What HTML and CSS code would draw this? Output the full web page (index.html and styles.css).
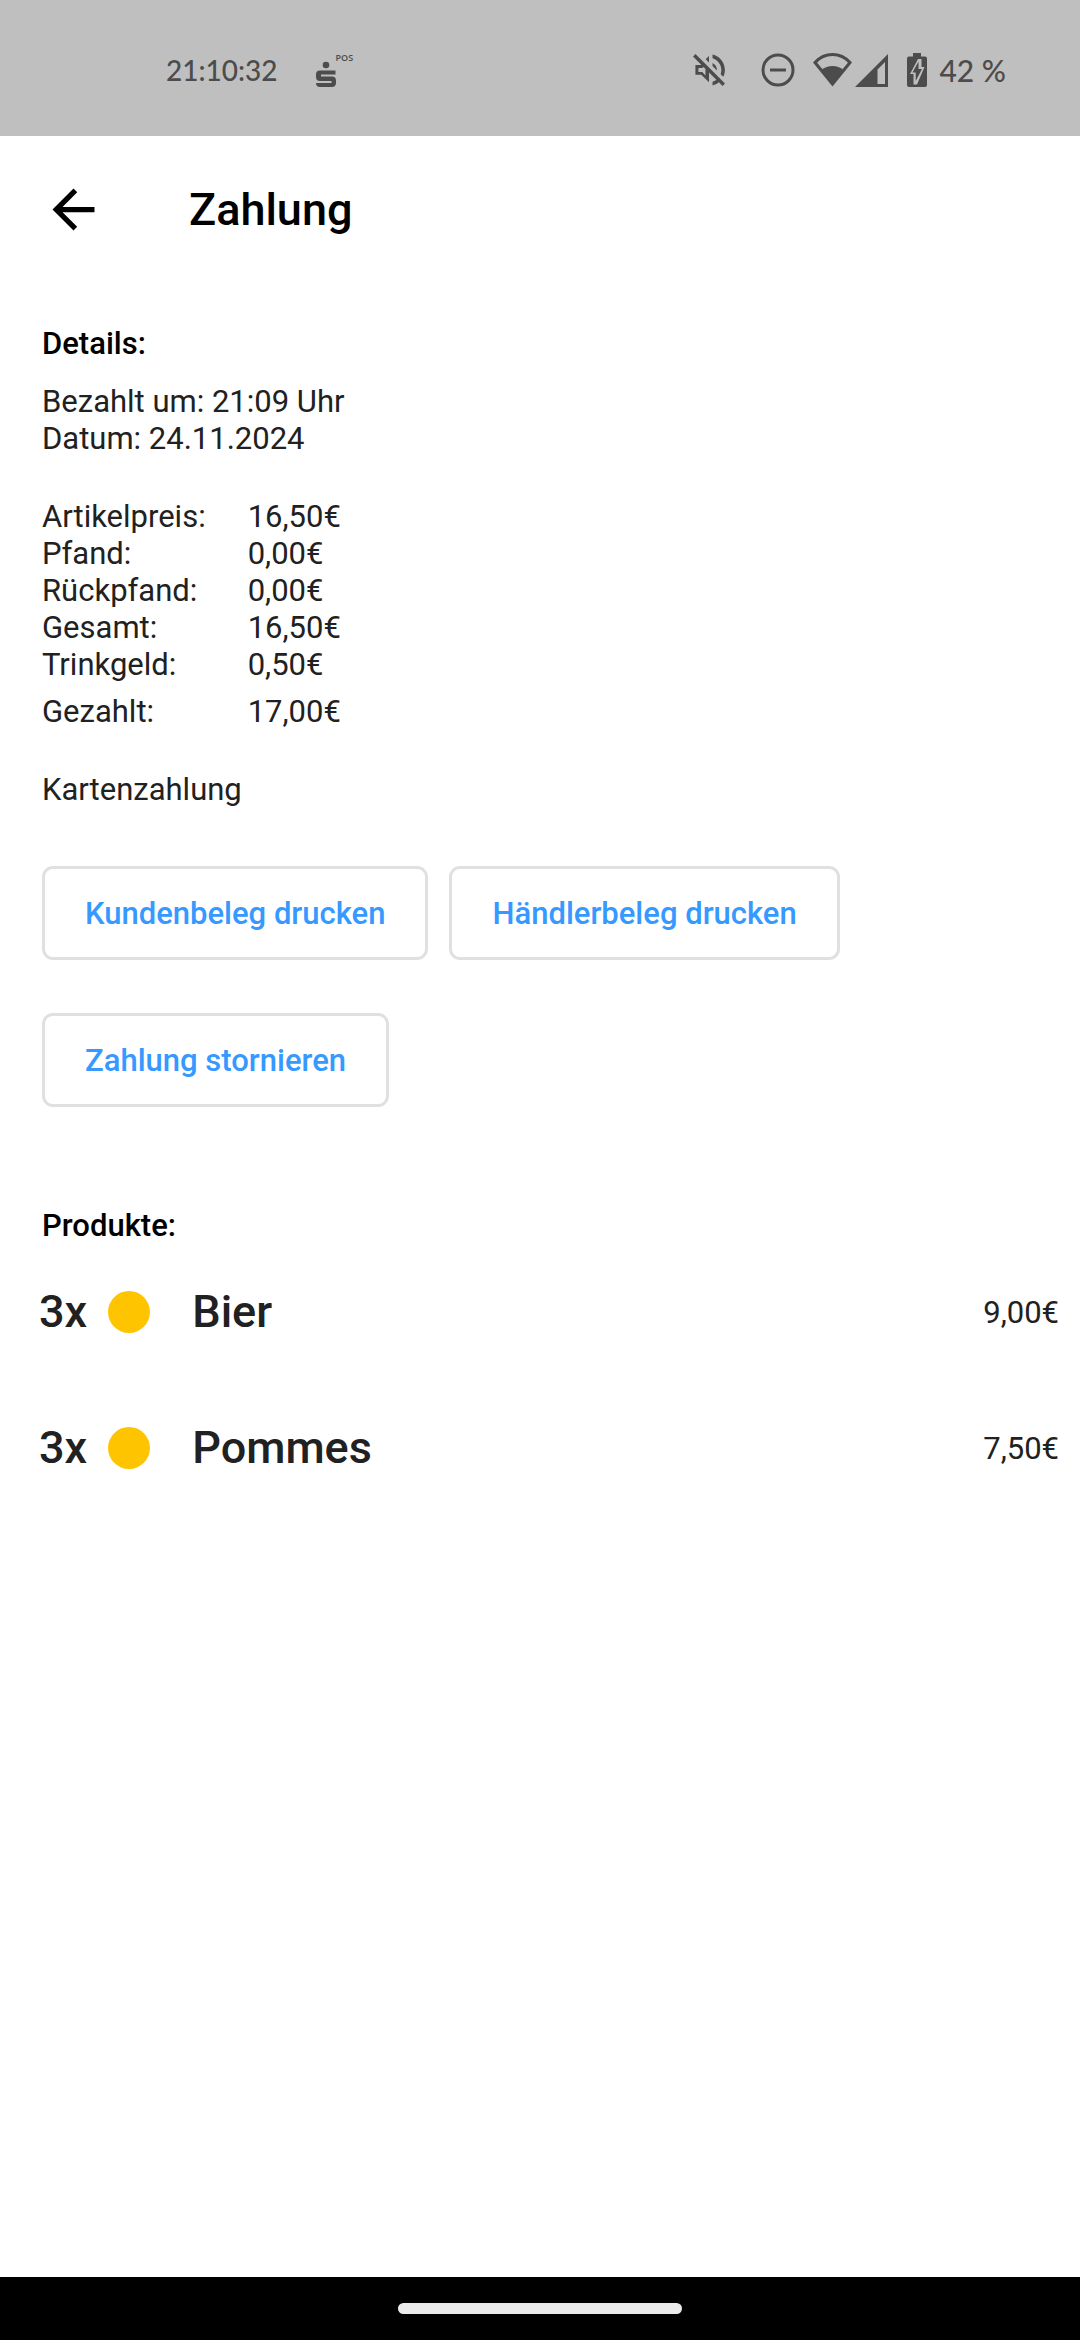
FILE: index.html
```html
<!DOCTYPE html>
<html lang="de">
<head>
    <meta charset="UTF-8">
    <meta name="viewport" content="width=device-width, initial-scale=1">
    <title>Zahlung</title>
    <link rel="stylesheet" href="styles.css">
</head>
<body>
<div class="status-bar">
    <span class="clock">21:10:32</span>
    <div class="pos">
        <svg class="pos-logo" width="20" height="26" viewBox="0 0 20 26">
            <circle cx="10" cy="4" r="3.3"/>
            <path d="M4 9.5H19.5V13.5H5V15.5H16A4 4 0 0 1 20 19.5V22.5A4 4 0 0 1 16 26H4A4 4 0 0 1 0 22H15.5V20H4A4 4 0 0 1 0 16V13.5A4 4 0 0 1 4 9.5Z"/>
        </svg>
        <span class="pos-text">POS</span>
    </div>
    <div class="status-icons">
        <svg class="icon-mute" width="32" height="32" viewBox="2.93 2.93 18.14 18.14">
            <path d="M4.34 2.93L2.93 4.34 7.59 9 7.4 9.2H4.3v5.5h3.3L12 19v-5.59l4.18 4.18c-.65.49-1.38.88-2.18 1.11v2.06c1.34-.3 2.57-.92 3.61-1.75l2.05 2.05 1.41-1.41zM10 15.17L8.2 13.2H6v-2.4h2.2l.7-.5L10 11.41zM19 12c0 .82-.15 1.61-.41 2.34l1.53 1.53c.56-1.17.88-2.48.88-3.87 0-4.28-2.99-7.86-7-8.77v2.06c2.89.86 5 3.54 5 6.71zm-7-8l-1.88 1.88L12 7.76zm4.5 8c0-1.77-1.02-3.29-2.5-4.03v1.79l2.48 2.48c.01-.08.02-.16.02-.24z"/>
        </svg>
        <svg class="icon-dnd" width="34" height="34" viewBox="0 0 34 34">
            <circle cx="17" cy="17" r="15" fill="none" stroke="currentColor" stroke-width="3"/>
            <path d="M9 15.5H25V18.5H9Z"/>
        </svg>
        <svg class="icon-wifi" width="39" height="34" viewBox="0 0 39 34">
            <path d="M19.5 1.5C12.5 1.5 6.5 4.5 2 9.5L19.5 31 37 9.5C32.5 4.5 26.5 1.5 19.5 1.5Z" fill="none" stroke="currentColor" stroke-width="3"/>
            <path d="M8.5 17C14.5 11.5 24.5 11.5 30.5 17L19.5 32Z"/>
        </svg>
        <svg class="icon-signal" width="33" height="33" viewBox="0 0 33 33">
            <path fill-rule="evenodd" d="M33 0V33H0ZM30 8L22.5 15.5V30H30Z"/>
        </svg>
        <svg class="icon-battery" width="20" height="34" viewBox="0 0 20 34">
            <path fill-rule="evenodd" d="M6 0H14V3.5H18A2 2 0 0 1 20 5.5V32A2 2 0 0 1 18 34H2A2 2 0 0 1 0 32V5.5A2 2 0 0 1 2 3.5H6ZM11 6L3 21H6.5V31.5H10L17.5 14H14.5V6Z"/>
            <path d="M11.5 8.5V16H15L8.7 28V19.5H5.5Z"/>
        </svg>
        <span class="battery-text">42 %</span>
    </div>
</div>

<header class="app-bar">
    <a href="#" class="back" aria-label="Zurück">
        <svg width="63" height="63" viewBox="0 0 24 24">
            <path d="M20 11H7.83l5.59-5.59L12 4l-8 8 8 8 1.41-1.41L7.83 13H20v-2z"/>
        </svg>
    </a>
    <h1>Zahlung</h1>
</header>

<main>
    <section class="details">
        <h2>Details:</h2>
        <p class="paid-at">Bezahlt um: 21:09 Uhr<br>Datum: 24.11.2024</p>
        <table class="amounts">
            <tr><th scope="row">Artikelpreis:</th><td>16,50€</td></tr>
            <tr><th scope="row">Pfand:</th><td>0,00€</td></tr>
            <tr><th scope="row">Rückpfand:</th><td>0,00€</td></tr>
            <tr><th scope="row">Gesamt:</th><td>16,50€</td></tr>
            <tr><th scope="row">Trinkgeld:</th><td>0,50€</td></tr>
            <tr class="paid"><th scope="row">Gezahlt:</th><td>17,00€</td></tr>
        </table>
        <p class="method">Kartenzahlung</p>
        <div class="actions">
            <button type="button">Kundenbeleg drucken</button>
            <button type="button">Händlerbeleg drucken</button>
            <button type="button">Zahlung stornieren</button>
        </div>
    </section>

    <section class="products">
        <h2>Produkte:</h2>
        <ul>
            <li>
                <span class="count">3x</span>
                <span class="dot"></span>
                <span class="name">Bier</span>
                <span class="price">9,00€</span>
            </li>
            <li>
                <span class="count">3x</span>
                <span class="dot"></span>
                <span class="name">Pommes</span>
                <span class="price">7,50€</span>
            </li>
        </ul>
    </section>
</main>

<div class="nav-bar">
    <div class="handle"></div>
</div>
</body>
</html>
```
FILE: styles.css
```css
* {
    box-sizing: border-box;
}
body {
    margin: 0;
    min-height: 100vh;
    display: flex;
    flex-direction: column;
    background: #fff;
    color: #212121;
    font-family: Roboto, "Liberation Sans", sans-serif;
    font-size: 31px;
    line-height: 37px;
}
h1, h2, p, ul {
    margin: 0;
    padding: 0;
}
svg {
    display: block;
    fill: currentColor;
}

/* status bar */
.status-bar {
    display: flex;
    align-items: center;
    height: 136px;
    padding: 4px 74px 0 166px;
    background: #bfbfbf;
    color: #4c4c4c;
    font-family: Lato, Roboto, sans-serif;
    font-size: 28px;
    font-weight: 500;
}
.pos {
    display: flex;
    align-items: flex-start;
    height: 34px;
    margin-left: 38px;
}
.pos-logo {
    margin-top: 8px;
}
.pos-text {
    font-family: "Open Sans", sans-serif;
    font-size: 9px;
    font-weight: 600;
    line-height: 10px;
}
.status-icons {
    display: flex;
    align-items: center;
    margin-left: auto;
}
.icon-dnd {
    margin-left: 36px;
}
.icon-wifi {
    margin-left: 18px;
}
.icon-signal {
    margin-left: 3px;
}
.icon-battery {
    margin-left: 19px;
}
.battery-text {
    margin-left: 12px;
    font-size: 30px;
}

/* app bar */
.app-bar {
    display: flex;
    align-items: center;
    height: 147px;
    padding: 0 42px;
    color: #000;
}
.back {
    color: inherit;
}
h1 {
    margin-left: 84px;
    font-size: 45px;
    font-weight: 500;
    line-height: 52px;
}

/* content */
main {
    flex: 1;
}
h2 {
    color: #000;
    font-size: 31px;
    font-weight: 500;
}
.details {
    padding: 42px 42px 0;
}
.paid-at {
    margin-top: 21px;
}
.amounts {
    margin-top: 41px;
    border-collapse: collapse;
}
.amounts th, .amounts td {
    padding: 0;
    font-weight: 400;
    text-align: left;
}
.amounts th {
    padding-right: 42px;
}
.amounts .paid th, .amounts .paid td {
    padding-top: 10px;
}
.method {
    margin-top: 41px;
}
.actions {
    display: flex;
    flex-wrap: wrap;
    gap: 53px 21px;
    margin-top: 58px;
}
button {
    height: 94px;
    padding: 0 40px;
    border: 3px solid #e0e0e0;
    border-radius: 11px;
    background: #fff;
    color: #3699ff;
    font-family: inherit;
    font-size: 31px;
    font-weight: 500;
    line-height: 37px;
}

/* products */
.products {
    padding-top: 100px;
}
.products h2 {
    padding-left: 42px;
}
.products ul {
    list-style: none;
}
.products li {
    display: flex;
    align-items: center;
    height: 136px;
    padding: 0 21px 0 39px;
}
.count, .name {
    font-size: 45px;
    font-weight: 500;
    line-height: 52px;
}
.dot {
    width: 42px;
    height: 42px;
    margin: 0 42px 0 21px;
    border-radius: 50%;
    background: #ffc400;
}
.price {
    margin-left: auto;
}

/* gesture bar */
.nav-bar {
    display: flex;
    align-items: center;
    justify-content: center;
    height: 63px;
    background: #000;
}
.handle {
    width: 284px;
    height: 11px;
    border-radius: 6px;
    background: #ebebeb;
}
```
